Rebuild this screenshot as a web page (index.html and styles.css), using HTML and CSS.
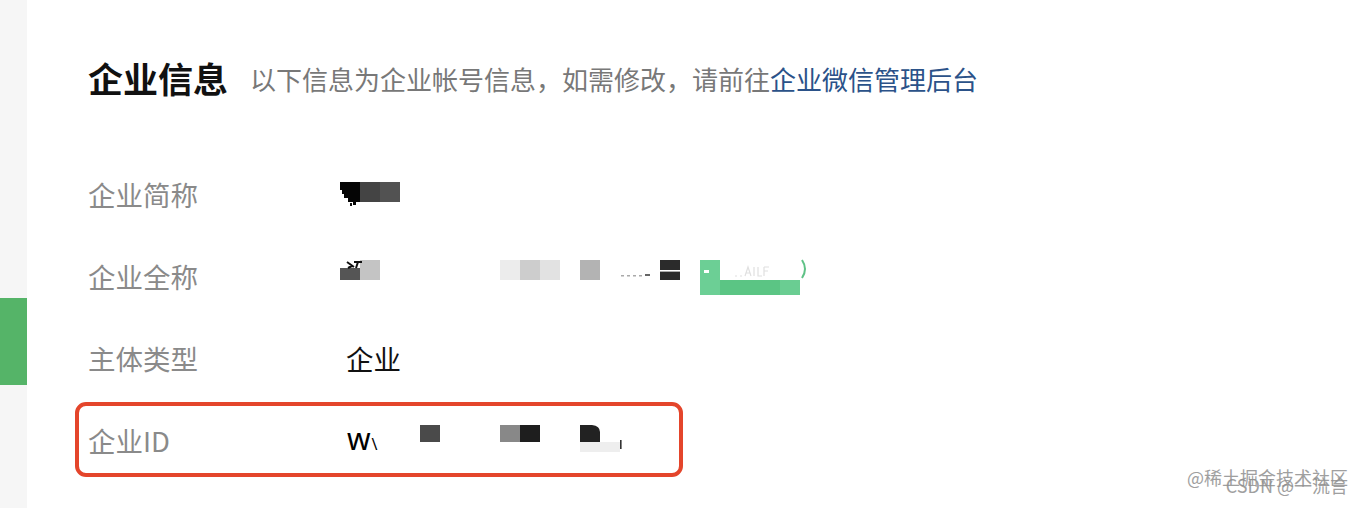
FILE: index.html
```html
<!DOCTYPE html>
<html lang="zh-CN">
<head>
<meta charset="utf-8">
<title>企业信息</title>
<link rel="stylesheet" href="styles.css">
</head>
<body>
<div class="page">
  <aside class="sidebar">
    <div class="sidebar-active"></div>
  </aside>
  <main class="main">
    <header class="head">
      <h1 class="title">企业信息</h1>
      <p class="subtitle">以下信息为企业帐号信息，如需修改，请前往<a class="link" href="#">企业微信管理后台</a></p>
    </header>
    <section class="rows">
      <div class="row">
        <div class="label">企业简称</div>
        <div class="value">
          <svg class="mosaic" width="80" height="40" viewBox="0 0 80 40">
            <path d="M0 8H20V28H16V31H13V28H8V24H4V20H2V16H0Z" fill="#050505"/>
            <rect x="20" y="8" width="20" height="20" fill="#444"/>
            <rect x="40" y="8" width="20" height="20" fill="#525252"/>
            <rect x="10" y="29" width="2" height="3" fill="#111"/>
          </svg>
        </div>
      </div>
      <div class="row">
        <div class="label">企业全称</div>
        <div class="value">
          <svg class="mosaic" width="480" height="44" viewBox="0 0 480 44">
            <rect x="0" y="14" width="20" height="12" fill="#555"/>
            <rect x="20" y="6" width="20" height="20" fill="#c4c4c4"/>
            <path d="M7 8L14 13M14 8H22M18 8L16 14M8 14L12 12" stroke="#111" stroke-width="2" fill="none"/>
            <rect x="160" y="6" width="20" height="20" fill="#ececec"/>
            <rect x="180" y="6" width="20" height="20" fill="#cdcdcd"/>
            <rect x="200" y="6" width="20" height="20" fill="#e2e2e2"/>
            <rect x="240" y="6" width="20" height="20" fill="#b3b3b3"/>
            <rect x="281" y="21" width="3" height="1.5" fill="#aaa"/>
            <rect x="287" y="21" width="3" height="1.5" fill="#aaa"/>
            <rect x="293" y="21" width="3" height="1.5" fill="#aaa"/>
            <rect x="299" y="21" width="3" height="1.5" fill="#aaa"/>
            <rect x="305" y="20" width="5" height="2" fill="#666"/>
            <rect x="320" y="6" width="20" height="20" fill="#2b2b2b"/>
            <rect x="320" y="16" width="22" height="1.6" fill="#fff"/>
            <rect x="360" y="6" width="20" height="35" fill="#6ccf95"/>
            <rect x="380" y="26" width="60" height="15" fill="#5bc584"/>
            <rect x="440" y="26" width="20" height="15" fill="#6acd92"/>
            <rect x="364" y="16" width="5" height="3" fill="#fff"/>
            <path d="M395 22h2M400 22h2M405 22l3-9 3 9M406 19h4M414 13v9M418 13v9h4M424 13v9M424 13h5M424 17h4" stroke="#e0e0e0" stroke-width="1.2" fill="none"/>
            <path d="M462 6q6 9 0 18" stroke="#5fc286" stroke-width="2" fill="none"/>
          </svg>
        </div>
      </div>
      <div class="row">
        <div class="label">主体类型</div>
        <div class="value value-text">企业</div>
      </div>
      <div class="row row-highlight">
        <div class="label">企业ID</div>
        <div class="value">
          <span class="id-start">w<span class="id-tick">\</span></span>
          <svg class="mosaic" width="260" height="40" viewBox="0 0 260 40">
            <rect x="40" y="5" width="20" height="17" fill="#4a4a4a"/>
            <rect x="120" y="5" width="20" height="17" fill="#888"/>
            <rect x="140" y="5" width="20" height="17" fill="#1e1e1e"/>
            <rect x="200" y="22" width="40" height="10" fill="#eeeeee"/>
            <path d="M200 5H212Q220 6 220 12V22H200Z" fill="#222"/>
            <rect x="240" y="20" width="1.6" height="9" fill="#333"/>
          </svg>
        </div>
      </div>
    </section>
  </main>
</div>
<div class="watermark">
  <span class="wm-a">@稀土掘金技术社区</span>
  <span class="wm-b">CSDN @一流言</span>
</div>
</body>
</html>
```
FILE: styles.css
```css
*, *::before, *::after {
  box-sizing: border-box;
}

html, body {
  margin: 0;
  padding: 0;
  background: #ffffff;
}

body {
  font-family: "Noto Sans CJK SC", "Noto Sans", sans-serif;
  width: 1362px;
  height: 508px;
  overflow: hidden;
  position: relative;
}

.page {
  display: flex;
  height: 508px;
}

.sidebar {
  width: 27px;
  flex: 0 0 27px;
  background: #f6f6f6;
  padding-top: 298px;
}

.sidebar-active {
  height: 87px;
  background: #55b468;
}

.main {
  flex: 1;
  padding-left: 61px;
  padding-top: 56px;
}

.head {
  display: flex;
  align-items: center;
  height: 44px;
}

.title {
  margin: 0;
  font-size: 35px;
  font-weight: 700;
  color: #111111;
  line-height: 44px;
}

.subtitle {
  margin: 0 0 0 22px;
  font-size: 26px;
  color: #787878;
  line-height: 44px;
  padding-top: 2px;
}

.link {
  color: #2b5289;
  text-decoration: none;
}

.rows {
  margin-top: 53px;
  display: flex;
  flex-direction: column;
}

.row {
  display: flex;
  align-items: center;
  height: 82px;
  position: relative;
}

.label {
  width: 252px;
  flex: 0 0 252px;
  font-size: 27.5px;
  color: #8a8a8a;
  line-height: 40px;
}

.value {
  display: flex;
  align-items: center;
  height: 44px;
}

.value-text {
  font-size: 27.5px;
  color: #111111;
  padding-left: 6px;
  line-height: 40px;
}

.mosaic {
  display: block;
}

.id-start {
  width: 40px;
  flex: 0 0 40px;
  padding-left: 7px;
  font-size: 30px;
  font-family: "Noto Sans", "DejaVu Sans", sans-serif;
  color: #000000;
  line-height: 40px;
  overflow: hidden;
  white-space: nowrap;
  padding-top: 2px;
}

.id-tick {
  font-size: 16px;
  margin-left: 1px;
}

.row-highlight::after {
  content: "";
  position: absolute;
  left: -13px;
  top: 3px;
  width: 608px;
  height: 75px;
  border: 4px solid #e4452b;
  border-radius: 11px;
  pointer-events: none;
}

.watermark {
  position: absolute;
  right: 14px;
  bottom: 6px;
  width: 170px;
  height: 36px;
  color: #8f8f8f;
  pointer-events: none;
}

.wm-a {
  position: absolute;
  right: 0;
  top: 0;
  font-size: 18px;
  line-height: 22px;
  white-space: nowrap;
  opacity: 0.85;
}

.wm-b {
  position: absolute;
  right: 0;
  top: 8px;
  font-size: 18px;
  line-height: 22px;
  white-space: nowrap;
  opacity: 0.85;
}
```
